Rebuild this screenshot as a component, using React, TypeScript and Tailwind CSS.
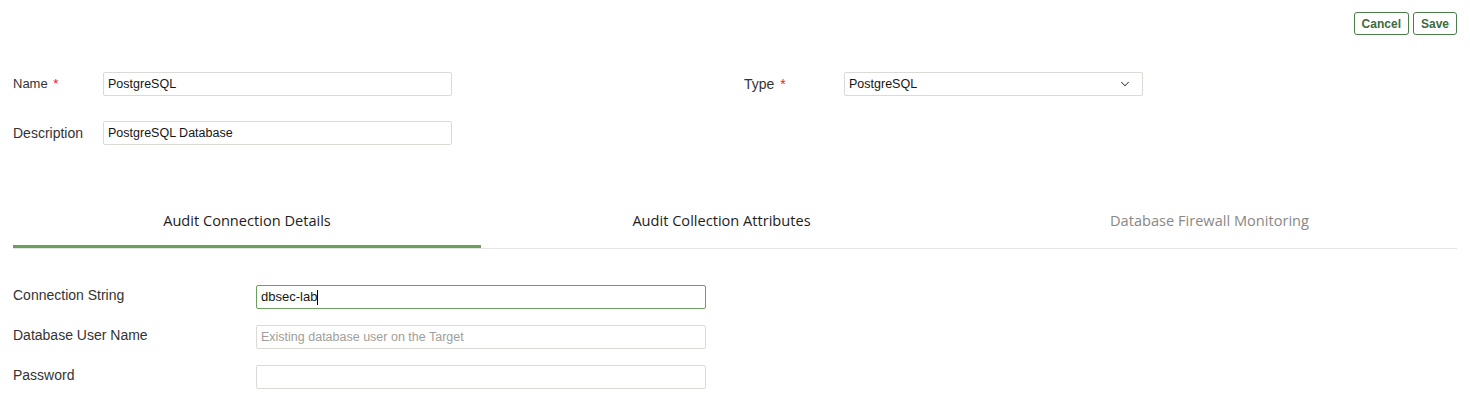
import { ChevronDown } from "lucide-react";

const tabs = [
  { label: "Audit Connection Details", w: "w-[468px]", active: true, muted: false },
  { label: "Audit Collection Attributes", w: "w-[481px]", active: false, muted: false },
  { label: "Database Firewall Monitoring", w: "w-[495px]", active: false, muted: true },
];

export default function App() {
  return (
    <div className="w-[1470px] h-[402px] bg-white font-['Liberation_Sans',Arial,sans-serif] text-[#333] overflow-hidden">
      <div className="flex justify-end gap-[4px] pt-[12px] pr-[13px]">
        <button className="h-[23px] px-[7px] rounded-[3px] border border-[#4a7d4a] text-[12px] font-bold text-[#3d6b3d] leading-none">
          Cancel
        </button>
        <button className="h-[23px] px-[7px] rounded-[3px] border border-[#4a7d4a] text-[12px] font-bold text-[#3d6b3d] leading-none">
          Save
        </button>
      </div>

      <div className="flex pl-[13px] pt-[37px]">
        <div className="w-[731px] flex flex-col gap-[25px]">
          <div className="flex items-center h-[24px]">
            <span className="w-[90px] text-[13px]">
              Name <span className="text-[#e5202e] ml-[2px]">*</span>
            </span>
            <div className="w-[349px] h-[24px] border border-[#dcdad5] rounded-[2px] flex items-center px-[4px] text-[12.5px] text-[#161513]">
              PostgreSQL
            </div>
          </div>
          <div className="flex items-center h-[24px]">
            <span className="w-[90px] text-[14px]">Description</span>
            <div className="w-[349px] h-[24px] border border-[#dcdad5] rounded-[2px] flex items-center px-[4px] text-[12.5px] text-[#161513]">
              PostgreSQL Database
            </div>
          </div>
        </div>
        <div className="flex items-start">
          <div className="flex items-center h-[24px]">
            <span className="w-[100px] text-[14px]">
              Type <span className="text-[#e5202e] ml-[2px]">*</span>
            </span>
            <div className="w-[299px] h-[24px] border border-[#dcdad5] rounded-[2px] flex items-center justify-between pl-[4px] pr-[10px] text-[12.5px] text-[#161513]">
              PostgreSQL
              <ChevronDown size={14} strokeWidth={1.75} className="text-[#444]" />
            </div>
          </div>
        </div>
      </div>

      <div className="mx-[13px] mt-[53px] flex border-b border-[#e6e6e6] font-['Open_Sans',sans-serif]">
        {tabs.map((t) => (
          <div
            key={t.label}
            className={`${t.w} h-[50px] flex items-center justify-center text-[14.6px] ${
              t.active ? "border-b-[3px] border-[#6c9e5e] text-[#1d1d1d] -mb-px pb-[2px]" : "text-[#1d1d1d] pb-[5px]"
            } ${t.muted ? "text-[#8a8886]" : ""}`}
          >
            {t.label}
          </div>
        ))}
      </div>

      <div className="pl-[13px] pt-[36px] flex flex-col gap-[16px] text-[14px]">
        <div className="flex items-center h-[24px]">
          <span className="w-[243px] -mt-[4px]">Connection String</span>
          <div className="w-[450px] h-[24px] border border-[#6c9e5e] rounded-[2px] flex items-center px-[4px] text-[13px] text-[#161513]">
            dbsec-lab<span className="inline-block w-px h-[15px] bg-black" />
          </div>
        </div>
        <div className="flex items-center h-[24px]">
          <span className="w-[243px] -mt-[4px]">Database User Name</span>
          <div className="w-[450px] h-[24px] border border-[#dcdad5] rounded-[2px] flex items-center px-[4px] text-[12.5px] text-[#a09e9a]">
            Existing database user on the Target
          </div>
        </div>
        <div className="flex items-center h-[24px]">
          <span className="w-[243px] -mt-[4px]">Password</span>
          <div className="w-[450px] h-[24px] border border-[#dcdad5] rounded-[2px]" />
        </div>
      </div>
    </div>
  );
}
